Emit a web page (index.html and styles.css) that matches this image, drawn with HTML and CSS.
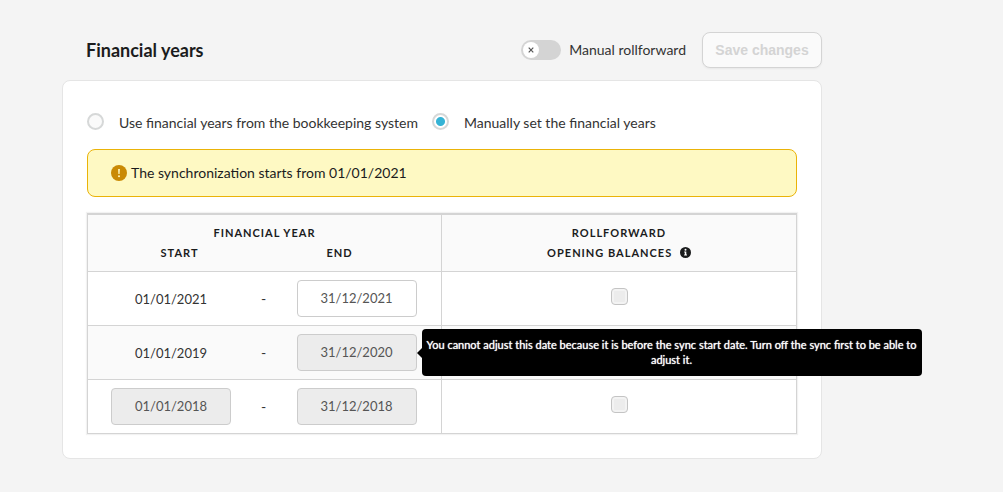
FILE: index.html
```html
<!DOCTYPE html>
<html lang="en">
<head>
    <meta charset="UTF-8">
    <meta name="viewport" content="width=device-width, initial-scale=1.0">
    <title>Financial years</title>
    <link rel="stylesheet" href="styles.css">
</head>
<body>
    <main class="page">
        <header class="page-header">
            <h1>Financial years</h1>
            <label class="toggle">
                <input type="checkbox" role="switch">
                <span class="track">
                    <span class="knob">
                        <svg width="6" height="6" viewBox="0 0 6 6"><path d="M0.7 0.7L5.3 5.3M5.3 0.7L0.7 5.3" stroke="#555" stroke-width="1.2"/></svg>
                    </span>
                </span>
                Manual rollforward
            </label>
            <button class="save" type="button" disabled>Save changes</button>
        </header>

        <section class="card">
            <div class="options">
                <label><input type="radio" name="source" value="system">Use financial years from the bookkeeping system</label>
                <label><input type="radio" name="source" value="manual" checked>Manually set the financial years</label>
            </div>

            <p class="notice">
                <svg width="16" height="16" viewBox="0 0 16 16">
                    <circle cx="8" cy="8" r="8" fill="#ca8a04"/>
                    <path d="M7.100 4h1.800l-.3 5H7.400z" fill="#fef9c3"/>
                    <circle cx="8" cy="11.200" r="1" fill="#fef9c3"/>
                </svg>
                The synchronization starts from 01/01/2021
            </p>

            <table class="years">
                <colgroup>
                    <col class="col-start">
                    <col class="col-dash">
                    <col class="col-end">
                    <col>
                </colgroup>
                <thead>
                    <tr>
                        <th colspan="3">Financial year</th>
                        <th rowspan="2" class="roll">
                            Rollforward<br>
                            Opening balances
                            <svg class="info" width="11" height="11" viewBox="0 0 11 11">
                                <circle cx="5.500" cy="5.500" r="5.500" fill="#1b1c1d"/>
                                <circle cx="5.500" cy="2.700" r="1" fill="#fff"/>
                                <path d="M4.200 4.400h2.100v3.200h.7v1H4.100v-1h.7V5.400h-.6z" fill="#fff"/>
                            </svg>
                        </th>
                    </tr>
                    <tr>
                        <th class="start">Start</th>
                        <th></th>
                        <th class="end">End</th>
                    </tr>
                </thead>
                <tbody>
                    <tr>
                        <td><span class="date">01/01/2021</span></td>
                        <td class="dash">-</td>
                        <td><input class="date" type="text" value="31/12/2021" aria-label="End date"></td>
                        <td class="roll"><input type="checkbox" aria-label="Rollforward 2021" disabled></td>
                    </tr>
                    <tr>
                        <td><span class="date">01/01/2019</span></td>
                        <td class="dash">-</td>
                        <td>
                            <div class="tooltip-anchor">
                                <input class="date" type="text" value="31/12/2020" aria-label="End date" aria-describedby="sync-tip" disabled>
                                <div class="tooltip" id="sync-tip" role="tooltip">You cannot adjust this date because it is before the sync start date. Turn off the sync first to be able to adjust it.</div>
                            </div>
                        </td>
                        <td class="roll"><input type="checkbox" aria-label="Rollforward 2020" disabled></td>
                    </tr>
                    <tr>
                        <td><input class="date" type="text" value="01/01/2018" aria-label="Start date" disabled></td>
                        <td class="dash">-</td>
                        <td><input class="date" type="text" value="31/12/2018" aria-label="End date" disabled></td>
                        <td class="roll"><input type="checkbox" aria-label="Rollforward 2018" disabled></td>
                    </tr>
                </tbody>
            </table>
        </section>
    </main>
</body>
</html>
```
FILE: styles.css
```css
* {
    box-sizing: border-box;
}
body {
    margin: 0;
    background-color: #f4f4f4;
    color: #333;
    font-family: Lato, sans-serif;
    font-size: 14px;
    line-height: 20px;
}
.page {
    margin: 32px 181px 32px 62px;
}
.page-header {
    display: flex;
    align-items: center;
    gap: 16px;
    padding-left: 24px;
    margin-bottom: 12px;
}
h1 {
    margin: 0 auto 0 0;
    font-size: 18px;
    color: #1b1c1d;
}

/* switch */
.toggle {
    display: flex;
    align-items: center;
    gap: 8px;
    position: relative;
}
.toggle input {
    position: absolute;
    opacity: 0;
}
.track {
    width: 40px;
    height: 20px;
    padding: 2px;
    border-radius: 10px;
    background-color: #d4d4d4;
}
.knob {
    display: flex;
    align-items: center;
    justify-content: center;
    width: 16px;
    height: 16px;
    border-radius: 50%;
    background-color: #fff;
}
.toggle input:checked + .track {
    padding-left: 22px;
    background-color: #35b3d5;
}

.save {
    min-width: 120px;
    height: 36px;
    padding: 0 12px;
    border: 1px solid #d4d4d4;
    border-radius: 8px;
    background-color: #fafafa;
    box-shadow: 0 1px 2px rgba(0, 0, 0, 0.05);
    color: #d4d4d4;
    font: bold 14px "Liberation Sans", sans-serif;
}

.card {
    padding: 24px;
    border: 1px solid #e5e5e5;
    border-radius: 8px;
    background-color: #fff;
}
.options {
    display: flex;
    gap: 14px;
    padding-top: 8px;
    margin-bottom: 16px;
}
.options label {
    display: flex;
    gap: 15px;
}
.options input {
    appearance: none;
    width: 17px;
    height: 17px;
    margin: 0;
    border: 2px solid #d6d8d8;
    border-radius: 50%;
    background-color: #fafafa;
}
.options input:checked {
    background: radial-gradient(circle, #35b3d5 4px, #fff 5px);
}

.notice {
    display: flex;
    align-items: center;
    gap: 4px;
    height: 48px;
    margin: 0 0 16px;
    padding: 0 23px;
    border: 1px solid #eab308;
    border-radius: 8px;
    background-color: #fef9c3;
    color: #1b1c1d;
}

.years {
    width: 100%;
    table-layout: fixed;
    border-collapse: collapse;
    border: 1px solid #d4d4d4;
    border-top-width: 2px;
    box-shadow: 0 0 1px 1px rgba(0, 0, 0, 0.05);
}
.col-start {
    width: 143px;
}
.col-dash {
    width: 66px;
}
.col-end {
    width: 145px;
}
th {
    padding: 0;
    background-color: #fafafa;
    color: #1b1c1d;
    font-size: 11px;
    letter-spacing: 1px;
    text-transform: uppercase;
}
thead tr:first-child th {
    padding-top: 8px;
}
thead tr:last-child th {
    padding-bottom: 8px;
}
thead th.start {
    padding-right: 32px;
    text-align: right;
}
thead th.end {
    padding-left: 30px;
    text-align: left;
}
thead .roll {
    padding-bottom: 8px;
}
.info {
    margin-left: 4px;
    vertical-align: -1px;
}
td {
    height: 54px;
    padding: 0;
}
tbody tr {
    border-top: 1px solid #d4d4d4;
}
tbody tr:nth-child(even) {
    background-color: #fafafa;
}
td:first-child {
    padding-left: 23px;
}
.date {
    display: block;
    width: 120px;
    height: 37px;
    padding: 0;
    border: 1px solid transparent;
    font-size: 13px;
    line-height: 37px;
    text-align: center;
}
input.date {
    border-color: #ccc;
    border-radius: 4px;
    background-color: #fff;
    color: #555;
    font-family: inherit;
}
input.date:disabled {
    background-color: #ececec;
    color: #555;
}
.dash {
    text-align: center;
}
.roll {
    border-left: 1px solid #d4d4d4;
    text-align: center;
}
.roll input {
    appearance: none;
    width: 17px;
    height: 17px;
    margin: 0;
    border: 1px solid #c4c4c4;
    border-radius: 4px;
    background-color: #ececec;
    box-shadow: inset 0 0 0 2px #f3f3f3;
}

/* tooltip */
.tooltip-anchor {
    position: relative;
}
.tooltip {
    position: absolute;
    left: 125px;
    top: -5px;
    z-index: 1;
    width: 500px;
    padding: 8px 2px 9px;
    border-radius: 4px;
    background-color: #000;
    color: #fff;
    font-size: 11px;
    line-height: 15px;
    text-align: center;
    text-shadow: 0 0 1px #fff;
}
.tooltip::before {
    content: "";
    position: absolute;
    right: 100%;
    top: 50%;
    margin-top: -5px;
    border: 5px solid transparent;
    border-left-width: 0;
    border-right-color: #000;
}
```
